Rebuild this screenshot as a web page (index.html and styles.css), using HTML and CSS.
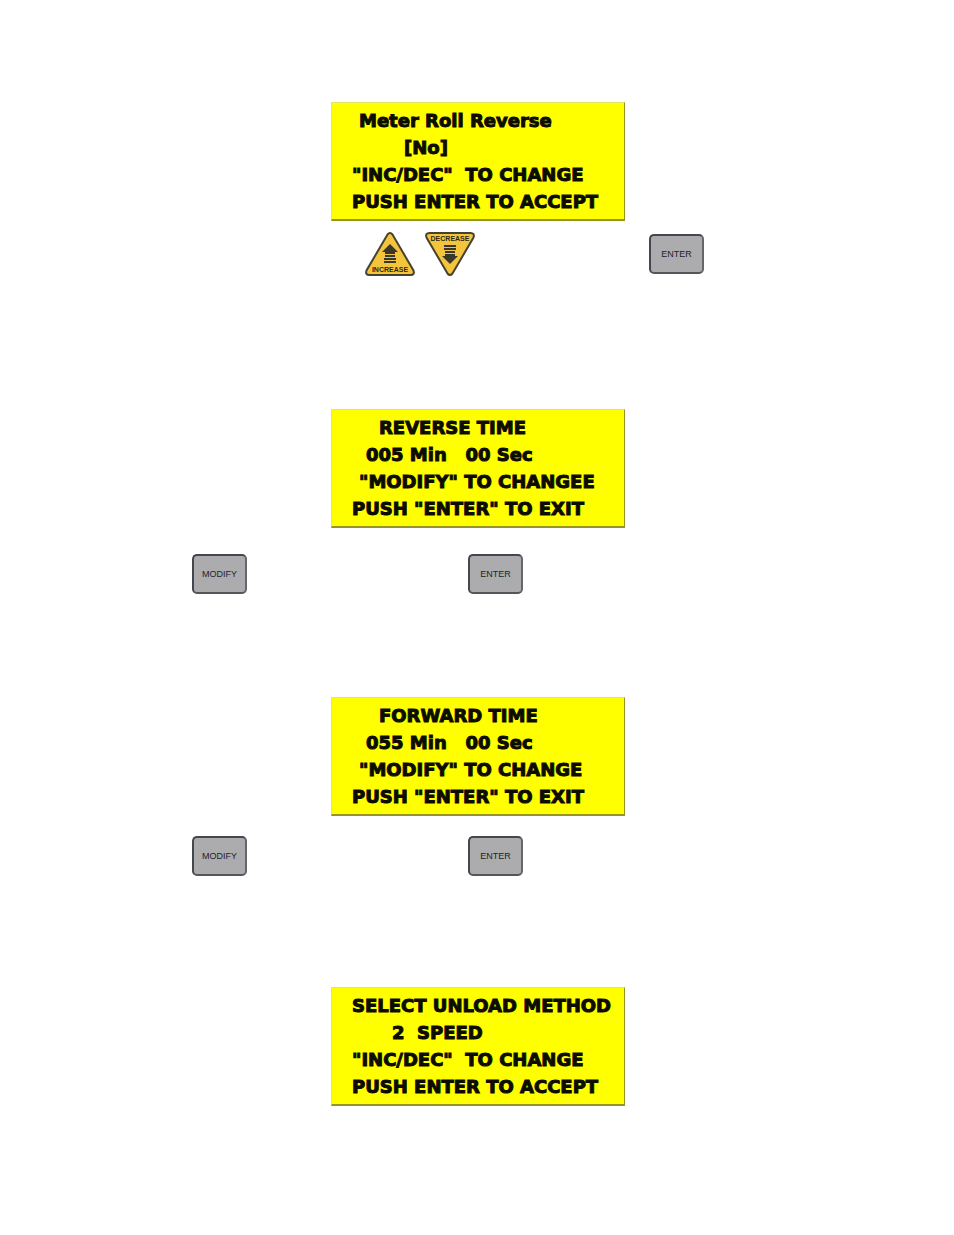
FILE: index.html
```html
<!DOCTYPE html>
<html lang="en">
<head>
<meta charset="utf-8">
<meta name="viewport" content="width=device-width, initial-scale=1">
<title>Meter Roll Setup</title>
<link rel="stylesheet" href="styles.css">
</head>
<body>
<main class="page">
  <section class="step step-direction">
    <div class="display">
      <p class="line indent-1">Meter Roll Reverse</p>
      <p class="line indent-5">[No]</p>
      <p class="line">"INC/DEC"&nbsp; TO CHANGE</p>
      <p class="line">PUSH ENTER TO ACCEPT</p>
    </div>
    <div class="keys keys-adjust">
      <div class="arrows">
        <button class="arrow" type="button" aria-label="Increase">
          <svg width="50" height="44" viewBox="0 0 50 44">
            <path class="plate" d="M22.5 2.5Q25 -.5 27.5 2.5L48.5 38.5Q50 43 45.5 43H4.5Q0 43 1.5 38.5Z"/>
            <path class="glyph" d="M25 12L33 20H30V22H20V20H17ZM20 23H30V25H20ZM19 26H31V28H19ZM19 29H31V31H19Z"/>
            <text class="label" x="25" y="40" text-anchor="middle">INCREASE</text>
          </svg>
        </button>
        <button class="arrow" type="button" aria-label="Decrease">
          <svg width="50" height="44" viewBox="0 0 50 44">
            <path class="plate" d="M22.5 41.5Q25 44.5 27.5 41.5L48.5 5.5Q50 1 45.5 1H4.5Q0 1 1.5 5.5Z"/>
            <path class="glyph" d="M25 32L33 24H30V22H20V24H17ZM20 19H30V21H20ZM19 16H31V18H19ZM19 13H31V15H19Z"/>
            <text class="label" x="25" y="9" text-anchor="middle">DECREASE</text>
          </svg>
        </button>
      </div>
      <button class="key" type="button">ENTER</button>
    </div>
  </section>

  <section class="step step-reverse">
    <div class="display">
      <p class="line indent-3">REVERSE TIME</p>
      <p class="line indent-2">005 Min&nbsp;&nbsp; 00 Sec</p>
      <p class="line indent-1">"MODIFY" TO CHANGEE</p>
      <p class="line">PUSH "ENTER" TO EXIT</p>
    </div>
    <div class="keys">
      <button class="key" type="button">MODIFY</button>
      <button class="key" type="button">ENTER</button>
    </div>
  </section>

  <section class="step step-forward">
    <div class="display">
      <p class="line indent-3">FORWARD TIME</p>
      <p class="line indent-2">055 Min&nbsp;&nbsp; 00 Sec</p>
      <p class="line indent-1">"MODIFY" TO CHANGE</p>
      <p class="line">PUSH "ENTER" TO EXIT</p>
    </div>
    <div class="keys">
      <button class="key" type="button">MODIFY</button>
      <button class="key" type="button">ENTER</button>
    </div>
  </section>

  <section class="step step-unload">
    <div class="display">
      <p class="line">SELECT UNLOAD METHOD</p>
      <p class="line indent-4">2&nbsp; SPEED</p>
      <p class="line">"INC/DEC"&nbsp; TO CHANGE</p>
      <p class="line">PUSH ENTER TO ACCEPT</p>
    </div>
  </section>
</main>
</body>
</html>
```
FILE: styles.css
```css
* {
  box-sizing: border-box;
}

body {
  margin: 0;
  background: #fff;
  font-family: "Liberation Sans", Arial, sans-serif;
}

.page {
  display: flex;
  flex-direction: column;
  align-items: center;
  padding: 102px 16px 128px;
}

.step {
  display: flex;
  flex-direction: column;
  align-items: center;
  gap: 26px;
  width: 100%;
  max-width: 570px;
}

.step-direction {
  gap: 11px;
}

.step-reverse {
  margin-top: 133px;
}

.step-forward {
  gap: 20px;
  margin-top: 103px;
}

.step-unload {
  margin-top: 111px;
}

.display {
  width: 294px;
  margin-left: 2px;
  padding: 4px 0 4px 20px;
  background: #ff0;
  border: 1px solid #e4e46a;
  border-right-color: #96961e;
  border-bottom: 2px solid #96961e;
  color: #0c0c00;
  font-family: "DejaVu Sans", Verdana, sans-serif;
  font-size: 18px;
  font-weight: 700;
  line-height: 27px;
  white-space: nowrap;
  -webkit-text-stroke: 1px #0c0c00;
}

.line {
  margin: 0;
}

.indent-1 {
  padding-left: 7px;
}

.indent-2 {
  padding-left: 14px;
}

.indent-3 {
  padding-left: 27px;
}

.indent-4 {
  padding-left: 40px;
}

.indent-5 {
  padding-left: 52px;
}

.keys {
  display: flex;
  align-items: center;
  gap: 221px;
  width: 100%;
}

.keys-adjust {
  gap: 174px;
  padding-left: 173px;
}

.arrows {
  display: flex;
  gap: 10px;
}

.arrow {
  padding: 0;
  background: none;
  border: 0;
}

.arrow svg {
  display: block;
}

.plate {
  fill: #f4c53c;
  stroke: #45432f;
  stroke-width: 2;
}

.glyph {
  fill: #39372a;
}

.label {
  fill: #2c2818;
  font-family: "Liberation Sans", Arial, sans-serif;
  font-size: 7px;
  font-weight: 700;
}

.key {
  width: 55px;
  height: 40px;
  padding: 0;
  background: #acacae;
  border: 2px solid #45474e;
  border-right-color: #64666c;
  border-bottom-color: #54565c;
  border-radius: 5px;
  color: #222327;
  font-family: "Liberation Sans", Arial, sans-serif;
  font-size: 9px;
  line-height: 12px;
}
```
